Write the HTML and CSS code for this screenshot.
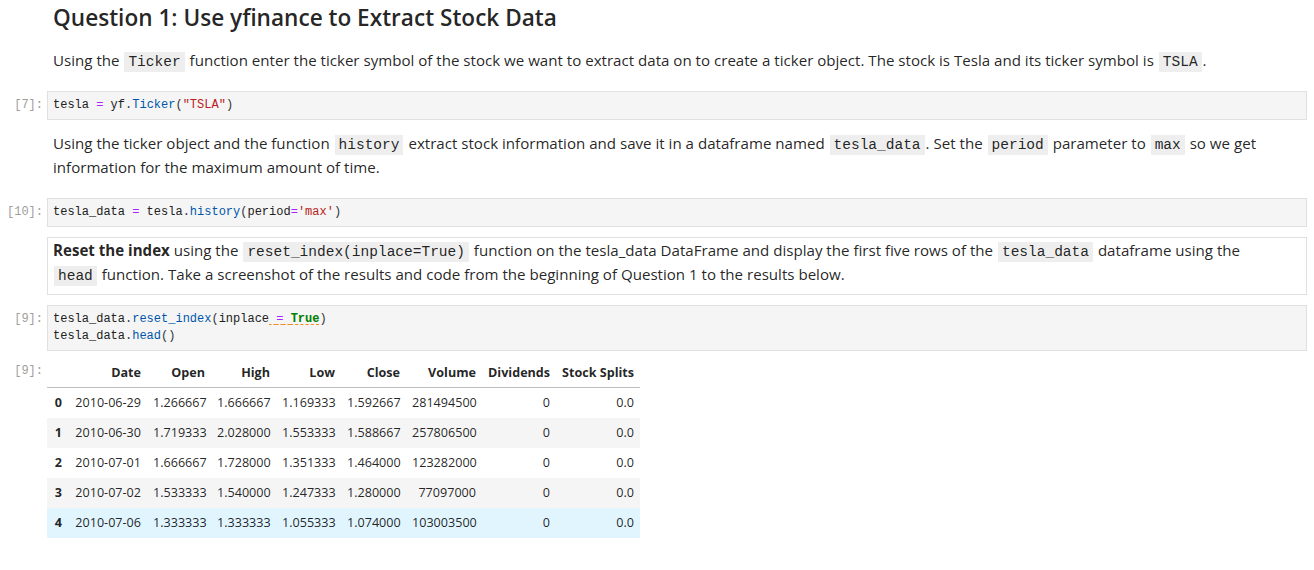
FILE: index.html
```html
<!DOCTYPE html>
<html>
<head>
<meta charset="utf-8">
<link rel="stylesheet" href="styles.css">
</head>
<body>
<div class="notebook">
  <div class="cell">
    <div class="prompt"></div>
    <div class="md heading-cell"><h2>Question 1: Use yfinance to Extract Stock Data</h2></div>
  </div>
  <div class="cell">
    <div class="prompt"></div>
    <div class="md"><p>Using the <code>Ticker</code> function enter the ticker symbol of the stock we want to extract data on to create a ticker object. The stock is Tesla and its ticker symbol is <code>TSLA</code>.</p></div>
  </div>
  <div class="cell">
    <div class="prompt">[7]:</div>
    <div class="input"><div class="line">tesla <span class="op">=</span> yf<span class="pu">.</span><span class="prop">Ticker</span><span class="pu">(</span><span class="str">"TSLA"</span><span class="pu">)</span></div></div>
  </div>
  <div class="cell">
    <div class="prompt"></div>
    <div class="md"><p>Using the ticker object and the function <code>history</code> extract stock information and save it in a dataframe named <code>tesla_data</code>. Set the <code>period</code> parameter to <code>max</code> so we get information for the maximum amount of time.</p></div>
  </div>
  <div class="cell">
    <div class="prompt">[10]:</div>
    <div class="input"><div class="line">tesla_data <span class="op">=</span> tesla<span class="pu">.</span><span class="prop">history</span><span class="pu">(</span>period<span class="op">=</span><span class="str">'max'</span><span class="pu">)</span></div></div>
  </div>
  <div class="cell">
    <div class="prompt"></div>
    <div class="md selected"><p><strong>Reset the index</strong> using the <code>reset_index(inplace=True)</code> function on the tesla_data DataFrame and display the first five rows of the <code>tesla_data</code> dataframe using the <code>head</code> function. Take a screenshot of the results and code from the beginning of Question 1 to the results below.</p></div>
  </div>
  <div class="cell code-cell">
    <div class="row">
      <div class="prompt">[9]:</div>
      <div class="input">
        <div class="line">tesla_data<span class="pu">.</span><span class="prop">reset_index</span><span class="pu">(</span>inplace<span class="lint"> <span class="op">=</span> <span class="kw">True</span></span><span class="pu">)</span></div>
        <div class="line">tesla_data<span class="pu">.</span><span class="prop">head</span><span class="pu">()</span></div>
      </div>
    </div>
    <div class="row output">
      <div class="prompt out">[9]:</div>
      <div class="output-body">
        <table class="df">
          <colgroup>
            <col class="w-idx"><col class="w-date"><col class="w-open"><col class="w-num"><col class="w-num"><col class="w-num"><col class="w-vol"><col class="w-div"><col class="w-split">
          </colgroup>
          <thead>
            <tr><th></th><th>Date</th><th>Open</th><th>High</th><th>Low</th><th>Close</th><th>Volume</th><th>Dividends</th><th>Stock Splits</th></tr>
          </thead>
          <tbody>
            <tr><th>0</th><td>2010-06-29</td><td>1.266667</td><td>1.666667</td><td>1.169333</td><td>1.592667</td><td>281494500</td><td>0</td><td>0.0</td></tr>
            <tr><th>1</th><td>2010-06-30</td><td>1.719333</td><td>2.028000</td><td>1.553333</td><td>1.588667</td><td>257806500</td><td>0</td><td>0.0</td></tr>
            <tr><th>2</th><td>2010-07-01</td><td>1.666667</td><td>1.728000</td><td>1.351333</td><td>1.464000</td><td>123282000</td><td>0</td><td>0.0</td></tr>
            <tr><th>3</th><td>2010-07-02</td><td>1.533333</td><td>1.540000</td><td>1.247333</td><td>1.280000</td><td>77097000</td><td>0</td><td>0.0</td></tr>
            <tr class="hover"><th>4</th><td>2010-07-06</td><td>1.333333</td><td>1.333333</td><td>1.055333</td><td>1.074000</td><td>103003500</td><td>0</td><td>0.0</td></tr>
          </tbody>
        </table>
      </div>
    </div>
  </div>
</div>
</body>
</html>
```
FILE: styles.css
```css
html, body {
  margin: 0;
  padding: 0;
  background: #ffffff;
}
body {
  font-family: "Open Sans", "Noto Sans", sans-serif;
  color: rgba(0, 0, 0, 0.87);
}
.notebook {
  display: flex;
  flex-direction: column;
  gap: 10px;
  padding: 4px 7px 0 0;
}
.cell {
  display: flex;
}
.code-cell {
  flex-direction: column;
}
.row {
  display: flex;
}
.row.output {
  margin-top: 7px;
}
.prompt {
  flex: none;
  width: 47px;
  box-sizing: border-box;
  padding: 6px 4px 0 0;
  text-align: right;
  font-family: "Liberation Mono", "DejaVu Sans Mono", monospace;
  font-size: 12px;
  line-height: 17px;
  color: #9e9e9e;
}
.prompt.out {
  padding-top: 5px;
}
.md {
  flex: 1;
  min-width: 0;
  border: 1px solid transparent;
  padding: 0 20px 8px 5px;
  font-size: 15.1px;
  line-height: 24px;
}
.md.selected {
  border-color: #e0e0e0;
}
.md.heading-cell {
  padding-bottom: 5px;
}
.md h2 {
  margin: 0;
  font-size: 22.6px;
  line-height: 26px;
  font-weight: 600;
  color: rgba(0, 0, 0, 0.87);
}
.md p {
  margin: 0;
}
.md strong {
  font-weight: 700;
}
.md code {
  font-family: "Liberation Mono", "DejaVu Sans Mono", monospace;
  font-size: 14.5px;
  line-height: 1;
  background: #eeeeee;
  padding: 2px 4px;
  margin: 0 1px;
  color: rgba(0, 0, 0, 0.87);
}
.input {
  flex: 1;
  min-width: 0;
  border: 1px solid #e0e0e0;
  background: #f5f5f5;
  padding: 5px;
  font-family: "Liberation Mono", "DejaVu Sans Mono", monospace;
  font-size: 12px;
  line-height: 17px;
  color: #212121;
}
.line {
  white-space: pre;
}
.op { color: #aa22ff; }
.prop { color: #0055aa; }
.str { color: #ba2121; }
.kw { color: #008000; font-weight: bold; }
.pu { color: #333333; }
.lint {
  text-decoration: underline dashed #f08c22;
  text-underline-offset: 2px;
}
.output-body {
  flex: 1;
  min-width: 0;
}
.df {
  border-collapse: collapse;
  table-layout: fixed;
  width: 593px;
  font-size: 12.6px;
  color: rgba(0, 0, 0, 0.87);
}
.w-idx { width: 21px; }
.w-date { width: 79px; }
.w-open { width: 64px; }
.w-num { width: 65px; }
.w-vol { width: 76px; }
.w-div { width: 74px; }
.w-split { width: 84px; }
.df th, .df td {
  text-align: right;
  padding: 6px 6px;
  white-space: nowrap;
  overflow: visible;
}
.df thead th {
  font-weight: 700;
  line-height: 17px;
  border-bottom: 1px solid #bdbdbd;
}
.df tbody th {
  font-weight: 700;
  line-height: 18px;
}
.df tbody td {
  line-height: 18px;
  font-weight: 400;
}
.df tbody tr:nth-child(even) {
  background: #f5f5f5;
}
.df tbody tr.hover {
  background: #e1f5fe;
}
```
